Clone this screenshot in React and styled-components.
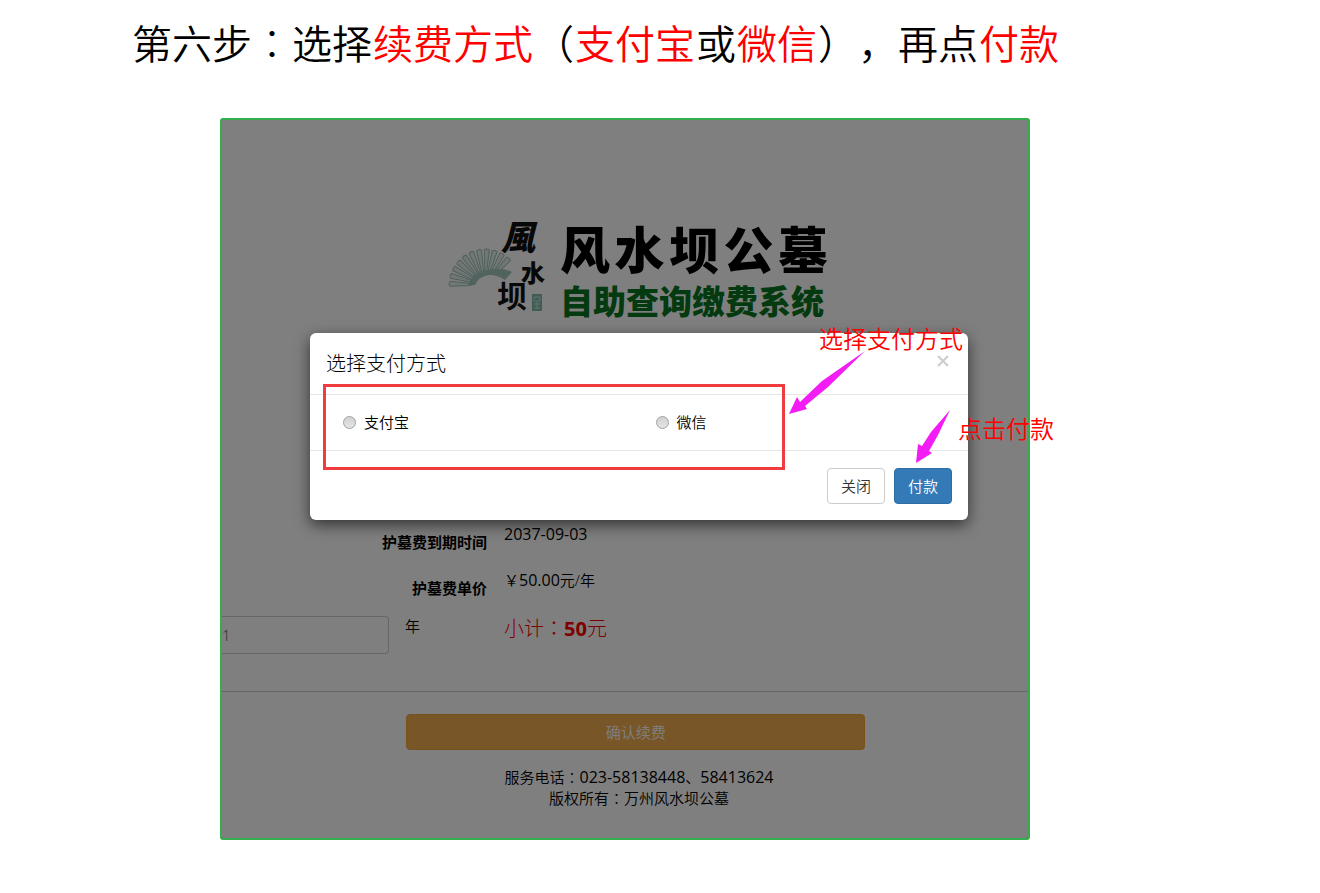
import React from "react";
import styled, { createGlobalStyle } from "styled-components";

const GlobalStyle = createGlobalStyle`
  *, *::before, *::after { box-sizing: border-box; }
  body {
    margin: 0;
    background: #fff;
    color: #000;
    font-family: "Open Sans", "Noto Sans CJK SC", sans-serif;
    font-size: 15px;
    font-weight: 350;
    line-height: 21px;
    text-spacing-trim: space-all;
  }
  button, input { font: inherit; }
`;

const Page = styled.main`
  padding: 14px 16px 53px 132px;
`;

const StepTitle = styled.h1`
  display: flex;
  flex-wrap: wrap;
  column-gap: 1px;
  margin: 0 0 44px;
  font-size: 40px;
  font-weight: 350;
  line-height: 60px;
`;

const Mark = styled.em`
  font-style: normal;
  color: #f00;
`;

const Centered = styled.span`
  font-family: "Noto Sans CJK TC", sans-serif;
  font-weight: 300;
  line-height: 1;
`;

const Frame = styled.section`
  position: relative;
  max-width: 810px;
  margin-left: 88px;
  border: 2px solid #34ae4c;
  border-radius: 3px;
  background: #fff;
`;

const Brand = styled.header`
  display: flex;
  justify-content: center;
  align-items: flex-end;
  gap: 12px;
  padding: 86px 0 204px 26px;
`;

const BrandNames = styled.div`
  display: flex;
  flex-direction: column;
  width: 268px;
`;

const BrandName = styled.div`
  display: flex;
  justify-content: space-between;
  font-size: 50px;
  font-weight: 900;
  line-height: 68px;
`;

const BrandSub = styled.div`
  font-size: 33px;
  font-weight: 900;
  line-height: 36px;
  white-space: nowrap;
  color: #087420;
`;

const Info = styled.dl`
  display: grid;
  grid-template-columns: 265px 1fr;
  column-gap: 17px;
  margin: 0;
`;

const InfoLabel = styled.dt`
  height: 46px;
  padding-top: 8px;
  text-align: right;
  font-weight: 700;
`;

const InfoValue = styled.dd`
  margin: 0;
`;

const Num = styled.span`
  font-size: 16px;
  font-weight: 400;
  line-height: 1;
`;

const YearsRow = styled.div`
  display: grid;
  grid-template-columns: 167px 83px 1fr;
  column-gap: 16px;
  padding-bottom: 37px;
  border-bottom: 1px solid #ccc;
`;

const YearsInput = styled.input`
  width: 100%;
  height: 38px;
  padding: 0;
  border: 1px solid #ccc;
  border-left: 0;
  border-radius: 0 4px 4px 0;
  background: #fff;
  color: #555;
  outline: 0;
`;

const Subtotal = styled.output`
  padding-top: 2px;
  font-size: 20px;
  font-weight: 300;
  color: #f00;
  b { font-weight: 700; }
`;

const ConfirmButton = styled.button`
  display: block;
  width: 57%;
  height: 36px;
  margin: 22px auto 17px 184px;
  border: 1px solid #eea236;
  border-radius: 4px;
  background: #f0ad4e;
  color: #fff;
`;

const Contact = styled.footer`
  padding: 0 0 29px 28px;
  text-align: center;
  p { margin: 0; }
`;

const Backdrop = styled.div`
  position: absolute;
  inset: 0;
  background: rgba(0, 0, 0, 0.5);
`;

const Dialog = styled.form`
  position: absolute;
  top: 213px;
  left: 88px;
  right: 60px;
  border-radius: 6px;
  background: #fff;
  box-shadow: 0 5px 15px rgba(0, 0, 0, 0.6);
`;

const DialogHeader = styled.div`
  display: flex;
  justify-content: space-between;
  padding: 16px;
  border-bottom: 1px solid #e5e5e5;
`;

const DialogTitle = styled.h2`
  margin: 0;
  font-size: 20px;
  font-weight: 300;
  line-height: 29px;
`;

const CloseButton = styled.button`
  width: 18px;
  height: 24px;
  padding: 0;
  border: 0;
  background: none;
  color: #ccc;
  svg { display: block; margin: auto; }
`;

const DialogBody = styled.div`
  display: grid;
  grid-template-columns: 1fr 1fr;
  padding: 17px 0 17px 33px;
`;

const Option = styled.label`
  display: flex;
  align-items: center;
  gap: 8px;
`;

const Radio = styled.input`
  appearance: none;
  width: 13px;
  height: 13px;
  margin: 0;
  border: 1px solid #a0a0a0;
  border-radius: 50%;
  background: linear-gradient(#d2d2d2, #e4e4e4);
  &:checked { background: radial-gradient(#555 35%, #e0e0e0 40%); }
`;

const DialogFooter = styled.div`
  display: flex;
  justify-content: flex-end;
  gap: 9px;
  padding: 17px 16px 16px;
  border-top: 1px solid #e5e5e5;
`;

const DialogButton = styled.button`
  height: 36px;
  padding: 0 13px;
  border: 1px solid ${(p) => (p.$primary ? "#2e6da4" : "#ccc")};
  border-radius: 4px;
  background: ${(p) => (p.$primary ? "#337ab7" : "#fff")};
  color: ${(p) => (p.$primary ? "#fff" : "#333")};
`;

const Highlight = styled.div`
  position: absolute;
  top: 264px;
  left: 101px;
  width: 462px;
  height: 86px;
  border: 3px solid #f03c3f;
  pointer-events: none;
`;

const Note = styled.span`
  position: absolute;
  top: ${(p) => p.$top}px;
  left: ${(p) => p.$left}px;
  font-size: 24px;
  line-height: 24px;
  white-space: nowrap;
  color: #f00;
`;

const Arrow = styled.svg`
  position: absolute;
  top: ${(p) => p.$top}px;
  left: ${(p) => p.$left}px;
  fill: #f41cf4;
  pointer-events: none;
`;

const fanAngles = [182, 195, 208, 221, 234, 247, 260, 273, 286, 299, 312];

function FanLogo() {
  return (
    <svg width="100" height="114" viewBox="448 206 100 114" role="img" aria-label="風水坝">
      <g stroke="#9dc2b8" strokeWidth="1">
        {fanAngles.map((a) => (
          <path
            key={a}
            d="M14 -1 L35 -2.5 Q37 0 35 2.5 L14 1 Z"
            fill="#e2eeea"
            transform={`translate(485 285) rotate(${a})`}
          />
        ))}
      </g>
      <path d="M468 285 Q472 274 484 271 Q500 266 512 272 L505 280 Q494 273 485 276 Q478 278 475 285 Z" fill="#a3c6bc" />
      <g fontFamily="Noto Sans CJK SC, sans-serif" fill="#111">
        <text x="501" y="250" fontSize="34" fontWeight="900" fontStyle="italic">風</text>
        <text x="521" y="282" fontSize="24" fontWeight="900">水</text>
        <text x="497" y="307" fontSize="30" fontWeight="700">坝</text>
      </g>
      <rect x="532" y="294" width="10" height="17" fill="#7fb8aa" />
      <path d="M534 297h6v4h-6zM534 304h6M537 302v7M534 308h6" fill="none" stroke="#c4e2da" />
    </svg>
  );
}

export default function App() {
  return (
    <Page>
      <GlobalStyle />
      <StepTitle>
        <span>第六步<Centered>：</Centered>选择</span>
        <Mark>续费方式</Mark>
        <span>（</span>
        <Mark>支付宝</Mark>
        <span>或</span>
        <Mark>微信</Mark>
        <span>），再点</span>
        <Mark>付款</Mark>
      </StepTitle>

      <Frame>
        <Brand>
          <FanLogo />
          <BrandNames>
            <BrandName>
              {[..."风水坝公墓"].map((c) => <span key={c}>{c}</span>)}
            </BrandName>
            <BrandSub>自助查询缴费系统</BrandSub>
          </BrandNames>
        </Brand>

        <Info>
          <InfoLabel>护墓费到期时间</InfoLabel>
          <InfoValue><Num>2037-09-03</Num></InfoValue>
          <InfoLabel>护墓费单价</InfoLabel>
          <InfoValue>￥<Num>50.00</Num>元/年</InfoValue>
        </Info>
        <YearsRow>
          <YearsInput id="years" defaultValue="1" />
          <label htmlFor="years">年</label>
          <Subtotal htmlFor="years">小计<Centered>：</Centered><b>50</b>元</Subtotal>
        </YearsRow>
        <ConfirmButton type="button">确认续费</ConfirmButton>
        <Contact>
          <p>服务电话<Centered>：</Centered><Num>023-58138448</Num>、<Num>58413624</Num></p>
          <p>版权所有<Centered>：</Centered>万州风水坝公墓</p>
        </Contact>

        <Backdrop />

        <Dialog role="dialog" aria-labelledby="pay-title" onSubmit={(e) => e.preventDefault()}>
          <DialogHeader>
            <DialogTitle id="pay-title">选择支付方式</DialogTitle>
            <CloseButton type="button" aria-label="关闭">
              <svg width="12" height="12" viewBox="0 0 12 12">
                <path d="M1 1L11 11M11 1L1 11" stroke="currentColor" strokeWidth="2" />
              </svg>
            </CloseButton>
          </DialogHeader>
          <DialogBody>
            <Option><Radio type="radio" name="pay" value="alipay" />支付宝</Option>
            <Option><Radio type="radio" name="pay" value="wechat" />微信</Option>
          </DialogBody>
          <DialogFooter>
            <DialogButton type="button">关闭</DialogButton>
            <DialogButton type="submit" $primary>付款</DialogButton>
          </DialogFooter>
        </Dialog>

        <Highlight />
        <Note $top={207} $left={597}>选择支付方式</Note>
        <Note $top={297} $left={736}>点击付款</Note>
        <Arrow $top={229} $left={565} width="80" height="67" viewBox="787 349 80 67">
          <path d="M865 351L822 381L800 402L797 397L789 414L807 409L805 406L828 387Z" />
        </Arrow>
        <Arrow $top={288} $left={692} width="38" height="57" viewBox="914 408 38 57">
          <path d="M950 410L931 432L922 446L918 444L916 463L932 453L929 451L938 435Z" />
        </Arrow>
      </Frame>
    </Page>
  );
}
